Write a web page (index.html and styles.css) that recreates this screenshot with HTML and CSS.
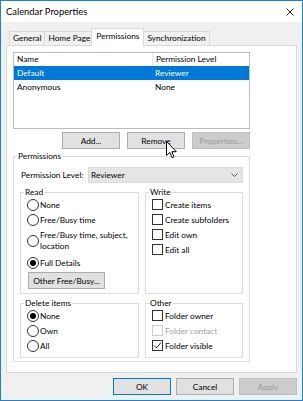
FILE: index.html
```html
<!DOCTYPE html>
<html lang="en">
<head>
  <meta charset="UTF-8">
  <title>Calendar Properties</title>
  <link rel="stylesheet" href="styles.css">
</head>
<body>
  <div class="window">
    <div class="titlebar">
      <span class="title">Calendar Properties</span>
      <svg class="close" width="8" height="8" viewBox="0 0 8 8"><path d="M0.5 0.5L7.5 7.5M7.5 0.5L0.5 7.5" stroke="#222" stroke-width="1"/></svg>
    </div>

    <div class="client">
      <div class="tabs">
        <div class="tab">General</div>
        <div class="tab">Home Page</div>
        <div class="tab selected">Permissions</div>
        <div class="tab">Synchronization</div>
      </div>

      <div class="panel">
        <div class="list">
          <div class="list-row list-head">
            <span class="col-name">Name</span>
            <span class="col-level">Permission Level</span>
          </div>
          <div class="list-row active">
            <span class="col-name">Default</span>
            <span class="col-level">Reviewer</span>
          </div>
          <div class="list-row">
            <span class="col-name">Anonymous</span>
            <span class="col-level">None</span>
          </div>
        </div>

        <div class="list-buttons">
          <button class="btn">Add...</button>
          <button class="btn">Remove
            <svg class="cursor" width="11" height="18" viewBox="0 0 11 18"><path d="M0.5 0.5V14.5L3.8 11.4L6 16.6L8 15.8L5.9 10.7H10.3Z" fill="#fff" stroke="#000" stroke-width="1" stroke-linejoin="miter"/></svg>
          </button>
          <button class="btn" disabled>Properties...</button>
        </div>

        <fieldset class="group perms">
          <legend>Permissions</legend>
          <div class="level-row">
            <span>Permission Level:</span>
            <div class="select">
              <span>Reviewer</span>
              <svg width="7" height="4" viewBox="0 0 7 4"><path d="M0.5 0.5L3.5 3.5L6.5 0.5" fill="none" stroke="#555" stroke-width="1"/></svg>
            </div>
          </div>

          <div class="subgroups">
            <fieldset class="group">
              <legend>Read</legend>
              <label class="opt"><span class="radio"></span>None</label>
              <label class="opt"><span class="radio"></span>Free/Busy time</label>
              <label class="opt two-line"><span class="radio"></span><span>Free/Busy time, subject,<br>location</span></label>
              <label class="opt"><span class="radio on"></span>Full Details</label>
              <button class="btn other-btn">Other Free/Busy...</button>
            </fieldset>

            <fieldset class="group">
              <legend>Write</legend>
              <label class="opt"><span class="check"></span>Create items</label>
              <label class="opt"><span class="check"></span>Create subfolders</label>
              <label class="opt"><span class="check"></span>Edit own</label>
              <label class="opt"><span class="check"></span>Edit all</label>
            </fieldset>

            <fieldset class="group">
              <legend>Delete items</legend>
              <label class="opt"><span class="radio on"></span>None</label>
              <label class="opt"><span class="radio"></span>Own</label>
              <label class="opt"><span class="radio"></span>All</label>
            </fieldset>

            <fieldset class="group">
              <legend>Other</legend>
              <label class="opt"><span class="check"></span>Folder owner</label>
              <label class="opt disabled"><span class="check"></span>Folder contact</label>
              <label class="opt"><span class="check on"><svg width="9" height="9" viewBox="0 0 9 9"><path d="M1 4.5L3.5 7L8 1.5" fill="none" stroke="#222" stroke-width="1"/></svg></span>Folder visible</label>
            </fieldset>
          </div>
        </fieldset>
      </div>

      <div class="actions">
        <button class="btn default">OK</button>
        <button class="btn">Cancel</button>
        <button class="btn" disabled>Apply</button>
      </div>
    </div>
  </div>
</body>
</html>
```

FILE: styles.css
```css
body {
  margin: 0;
  font-family: 'Lato', 'Liberation Sans', sans-serif;
  font-size: 8.3px;
  color: #000;
  background: #fff;
}
.window {
  box-sizing: border-box;
  width: 303px;
  height: 401px;
  border: 1px solid #1883d7;
  display: flex;
  flex-direction: column;
}
.titlebar {
  height: 21px;
  background: #fff;
  display: flex;
  align-items: center;
  justify-content: space-between;
  padding: 0 8px 0 5px;
}
.title {
  font-size: 9.4px;
}
.client {
  flex: 1;
  background: #f0f0f0;
  padding: 6px 5px 0 5px;
  display: flex;
  flex-direction: column;
}
.tabs {
  display: flex;
  align-items: flex-end;
  height: 17px;
  padding-left: 3px;
}
.tab {
  height: 13px;
  line-height: 13px;
  padding: 0 3px;
  border: 1px solid #d9d9d9;
  border-bottom: none;
  margin-right: -1px;
  background: #f0f0f0;
}
.tab.selected {
  position: relative;
  z-index: 1;
  height: 17px;
  line-height: 15px;
  margin: 0 -1px -1px -2px;
  padding: 0 4px;
  background: #fff;
}
.panel {
  box-sizing: border-box;
  height: 328px;
  background: #fff;
  border: 1px solid #d9d9d9;
  padding: 6px;
  display: flex;
  flex-direction: column;
}
.list {
  box-sizing: border-box;
  width: 237px;
  height: 77px;
  border: 1px solid #bcbcbc;
}
.list-row {
  display: flex;
  height: 14px;
  line-height: 14px;
}
.list-head {
  height: 13px;
  line-height: 13px;
}
.col-name {
  width: 135px;
  padding-left: 3px;
}
.col-level {
  padding-left: 3px;
}
.list-head .col-name {
  border-right: 1px solid #e5e5e5;
}
.list-row.active {
  background: #0078d7;
  color: #fff;
}
.list-buttons {
  width: 237px;
  display: flex;
  justify-content: flex-end;
  gap: 7px;
  margin-top: 3px;
}
.btn {
  position: relative;
  box-sizing: border-box;
  width: 58px;
  height: 17px;
  padding: 0;
  font-family: inherit;
  font-size: 8.3px;
  color: #000;
  background: #e1e1e1;
  border: 1px solid #adadad;
}
.btn:disabled {
  background: #cccccc;
  border-color: #bfbfbf;
  color: #9a9a9a;
}
.btn.default {
  border-color: #0078d7;
}
.cursor {
  position: absolute;
  left: 38px;
  top: 8px;
}
.group {
  margin: 0;
  padding: 0 6px 4px 6px;
  border: 1px solid #dcdcdc;
  min-width: 0;
}
.group legend {
  padding: 0 1px;
  margin-left: -3px;
  line-height: 10px;
}
.perms {
  width: 237px;
  box-sizing: border-box;
  margin-top: 2px;
  padding: 0 6px 3px 6px;
}
.level-row {
  display: flex;
  align-items: center;
  margin-top: 6px;
}
.level-row > span {
  width: 67px;
  padding-left: 1px;
}
.select {
  flex: 1;
  height: 14px;
  background: #e5e5e5;
  border: 1px solid #dadada;
  display: flex;
  align-items: center;
  justify-content: space-between;
  padding: 0 4px 0 2px;
}
.subgroups {
  display: grid;
  grid-template-columns: 119px 98px;
  column-gap: 6px;
  row-gap: 4px;
  margin-top: 4px;
}
.subgroups .group {
  padding: 0 5px 4px 6px;
}
.opt {
  display: flex;
  align-items: center;
  height: 15px;
  gap: 1px;
}
.opt.two-line {
  height: 28px;
  line-height: 11px;
}
.opt.disabled {
  color: #a0a0a0;
}
.radio {
  box-sizing: border-box;
  width: 12px;
  height: 12px;
  border: 1px solid #333;
  border-radius: 50%;
  background: #fff;
  display: flex;
  align-items: center;
  justify-content: center;
  flex-shrink: 0;
}
.radio.on::after {
  content: "";
  width: 6px;
  height: 6px;
  border-radius: 50%;
  background: #000;
}
.check {
  box-sizing: border-box;
  width: 11px;
  height: 11px;
  border: 1px solid #333;
  background: #fff;
  margin-right: 1px;
  display: flex;
  align-items: center;
  justify-content: center;
  flex-shrink: 0;
}
.opt.disabled .check {
  border-color: #cccccc;
}
.other-btn {
  width: 77px;
  margin-top: 2px;
  margin-left: 1px;
}
.actions {
  display: flex;
  justify-content: flex-end;
  gap: 5px;
  margin-top: 5px;
}
```
